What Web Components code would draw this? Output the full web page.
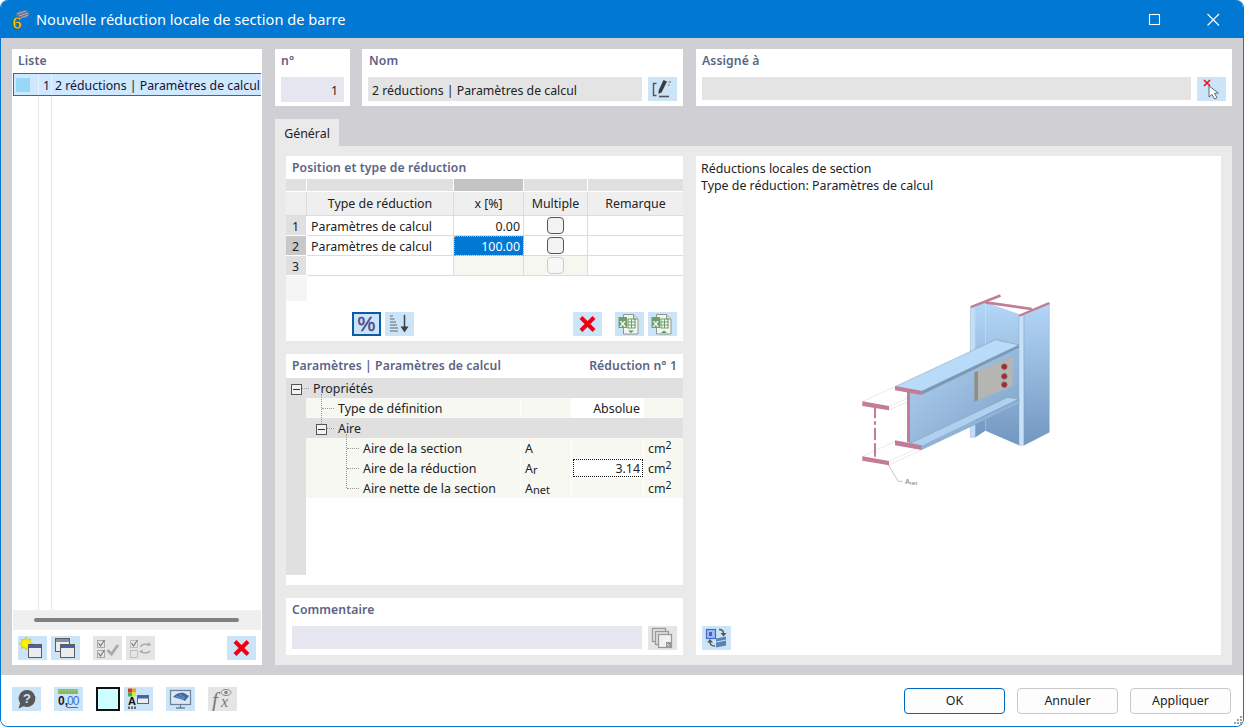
<!DOCTYPE html>
<html lang="fr"><head><meta charset="utf-8"><title>Nouvelle réduction</title>
<style>
html,body{margin:0;padding:0;height:100%;overflow:hidden;background:#fff}
body{font:12.4px/16px "Noto Sans","Liberation Sans",sans-serif;color:#222}
</style></head><body>
<app-window>
  <rf-main>
    <list-panel slot="list"></list-panel>
    <top-fields></top-fields>
    <tab-area>
      <position-table></position-table>
      <param-tree></param-tree>
      <comment-panel></comment-panel>
      <figure-panel slot="figure"></figure-panel>
    </tab-area>
  </rf-main>
  <footer-bar slot="footer"></footer-bar>
</app-window>
<script>
const FONT='"Noto Sans","Liberation Sans",sans-serif';
const WIN=(x,y,w,h)=>`<rect x="${x}" y="${y}" width="${w}" height="${h}" fill="#ececec" stroke="#5d5d5d"/><rect x="${x+.5}" y="${y+.5}" width="${w-1}" height="3" fill="#3f62b8"/>`;
const XLS=(arrow)=>`<path d="M8.500 2.500h10l4.500 4.500v15H8.500z" fill="#f4f4f4" stroke="#8a9a8a"/><path d="M18.500 2.500v4.500h4.500" fill="#ddd" stroke="#8a9a8a"/><rect x="3.500" y="5" width="8.500" height="11" fill="#6ea06e"/><text x="7.700" y="14.500" text-anchor="middle" font-family="Liberation Sans" font-weight="700" font-size="9.500" fill="#fff">X</text><path d="M12.500 7h8M12.500 10h8M12.500 13h8M12.500 16h8M13 7v9M16.500 7v9M20 7v9" stroke="#5f9a5f" stroke-width=".9"/>${arrow}`;
const ICONS={
 edit:`<path d="M8.500 6.500H5.500V18.500H8.500" fill="none" stroke="#555" stroke-width="1.400"/><path d="M11 19.500H21" stroke="#555" stroke-width="1.600"/><path d="M15.500 3l3.500 1.500-5.500 11-3 1.500.2-3.500z" fill="#3b3b3b"/><path d="M20.500 5h2.500M20 8h1.500" stroke="#666"/>`,
 cursorx:`<path d="M7 3l6 6M13 3l-6 6" stroke="#e8102a" stroke-width="1.700"/><path d="M12 9l0 11 3-2.500 2.500 4.500 2.500-1.300-2.500-4.300 3.800-.4z" fill="#fff" stroke="#666"/>`,
 percent:`<text x="14.500" y="19" text-anchor="middle" font-family="Liberation Sans" font-size="20" fill="#4b4a8e" stroke="#4b4a8e" stroke-width=".5">%</text>`,
 sort:`<path d="M5 4h3M5 7h4.500M5 10h6M5 13h7M5 16h8M5 19h8" stroke="#666" stroke-width="1"/><path d="M19.500 3v14" stroke="#444" stroke-width="1.500"/><path d="M15.500 14.500h8l-4 6z" fill="#3f3f3f"/>`,
 del:`<path d="M8 5.500l13 13M21 5.500l-13 13" stroke="#ee0011" stroke-width="4"/>`,
 xlsdown:XLS(`<path d="M13 18.500h6l-3 2.500z" fill="#4f9a5f"/>`),
 xlsup:XLS(`<path d="M13 21h6l-3-2.500z" fill="#4f9a5f"/>`),
 newwin:`<path d="M8 1l1.600 3 3.200-1-1 3.200 3 1.600-3 1.300 1 3.300-3.200-1.100L8 14l-1.500-2.700-3.300 1.100 1-3.300-3-1.300 3-1.600-1-3.200 3.300 1z" fill="#fff200" stroke="#b8a800" stroke-width=".5"/>${WIN(10.500,8.500,13,13)}`,
 copywin:`<rect x="4.500" y="2.500" width="14" height="13" fill="#ececec" stroke="#5d5d5d"/><rect x="5" y="3" width="13" height="3" fill="#8a8fa5"/>${WIN(9.500,8.500,14,13)}`,
 checkall:`<g fill="none" stroke="#aaa"><rect x="4.500" y="4.500" width="7" height="7"/><rect x="4.500" y="14.500" width="7" height="7"/></g><path d="M5.500 7l2 3 4-6M5.500 17l2 3 4-6" fill="none" stroke="#777" stroke-width="1.100"/><path d="M14.500 14l4 4 6.500-9" fill="none" stroke="#aaa" stroke-width="2.800"/>`,
 checktoggle:`<g fill="none" stroke="#c0c0c0"><rect x="4.500" y="14.500" width="7" height="7"/><rect x="4.500" y="4.500" width="7" height="7"/></g><path d="M5.500 7l2 3 4-6" fill="none" stroke="#777" stroke-width="1.100"/><path d="M14.500 11c1-3 6-3.500 9-2M24 15c-2 2.500-6 2.500-9 .7" fill="none" stroke="#aaa" stroke-width="1.500"/><path d="M22 6l3.500 3-4 1zM16.500 13.500l-3.500 2 3.500 2z" fill="#aaa"/>`,
 copydis:`<rect x="4.500" y="2.500" width="13" height="13" fill="none" stroke="#999" stroke-width="1.300"/><rect x="7.500" y="5.500" width="13" height="13" fill="#e0e0e0" stroke="#999" stroke-width="1.300"/><rect x="10.500" y="8.500" width="13" height="13" fill="#f0f0f0" stroke="#999" stroke-width="1.300"/><rect x="18" y="16" width="5" height="5" fill="#999"/><path d="M19 18l2 2" stroke="#eee"/>`,
 swap:`<rect x="4.500" y="3.500" width="9" height="9" fill="#9dbcf0" stroke="#4568c8" stroke-width="1.200"/><path d="M7 6h3v4H7z" fill="#3c63cf"/><path d="M17 3.500c3 0 4.500 1.500 4.500 4" fill="none" stroke="#555" stroke-width="1.300"/><path d="M18.500 7h6l-3 3.500z" fill="#555"/><path d="M13 20c-3 0-5-1.500-5-4" fill="none" stroke="#555" stroke-width="1.300"/><path d="M5 16.500h6l-3-3.500z" fill="#555"/><path d="M14 12.500l10-2v9l-10 2z" fill="#5b83b8"/><path d="M14 16l10-2" stroke="#d0e0f0"/>`,
 help:`<path d="M15 3a8.500 8.500 0 1 1-3.500 16.300l-5 2.200 1.600-5.300A8.500 8.500 0 0 1 15 3z" fill="#585858"/><text x="15" y="16.300" text-anchor="middle" font-family="Liberation Sans" font-weight="700" font-size="13" fill="#cce4f7">?</text>`,
 units:`<rect x="4" y="2" width="20" height="5" fill="#8fc36d"/><path d="M7 4.500v2.500M10 4.500v2.500M13 4.500v2.500M16 4.500v2.500M19 4.500v2.500M22 4.500v2.500" stroke="#5f9a45" stroke-width=".7"/><text x="4" y="18" font-family="Liberation Sans" font-weight="700" font-size="12" fill="#222">0,</text><text x="13" y="18" font-family="Liberation Sans" font-size="12" fill="#3b6fd0" letter-spacing="-1">00</text><path d="M13 20.500h11" stroke="#3b6fd0"/>`,
 colors:`<rect x="4" y="1.500" width="4" height="4" fill="#e52d2d"/><rect x="8" y="1.500" width="4" height="4" fill="#e8a02a"/><rect x="4" y="5.500" width="4" height="4" fill="#3bb24a"/><rect x="8" y="5.500" width="4" height="4" fill="#ece12a"/><text x="8" y="18" text-anchor="middle" font-family="Liberation Sans" font-weight="700" font-size="11" fill="#111">A</text><path d="M4 19.500h2v2.500H4zM7 19.500h2v2.500H7zM10 19.500h2v2.500h-2z" fill="#666"/><rect x="13.500" y="8.500" width="11" height="8" fill="#ececec" stroke="#666"/><rect x="14" y="9" width="10" height="2.500" fill="#3f62b8"/>`,
 display:`<rect x="4.500" y="3.500" width="20" height="14" fill="#dce7f2" stroke="#6c7f98" stroke-width="1.200"/><path d="M7 10c3-4 8-5 11-4l5 3c-1 2-3 3-4 5-3-2-8-3-12-4z" fill="#3f6aa8"/><path d="M10 9l8 3M13 7l6 4" stroke="#9cc0e8" stroke-width=".6"/><path d="M14.500 17.500v3M10 21h9" stroke="#6c7f98" stroke-width="1.300"/>`,
 fx:`<text x="4" y="20" font-family="Liberation Serif" font-style="italic" font-size="21" fill="#777">f</text><text x="13" y="20" font-family="Liberation Serif" font-style="italic" font-size="16" fill="#777">x</text><ellipse cx="18" cy="5.500" rx="5" ry="3" fill="#e5e5e5" stroke="#888"/><circle cx="18" cy="5.500" r="1.800" fill="#888"/>`
};
function def(name,html,init){customElements.define(name,class extends HTMLElement{
  constructor(){super();this.attachShadow({mode:'open'}).innerHTML=typeof html==='function'?html(this):html;}
  connectedCallback(){if(init)init(this)}
});}

def('icon-btn',()=>`<style>:host{display:inline-flex;width:29px;height:24px;box-sizing:border-box;background:#cce4f7;flex:none}
:host([disabled]){background:#e5e5e5}
:host([active]){outline:2px solid #0a5ca8;outline-offset:-2px}
svg{width:29px;height:24px;display:block}</style><svg viewBox="0 0 29 24"></svg>`,
 el=>{el.shadowRoot.querySelector('svg').innerHTML=ICONS[el.getAttribute('name')]||''});

def('panel-box',`<style>:host{display:flex;flex-direction:column;background:#fff;box-sizing:border-box;min-width:0}
.h{display:flex;justify-content:space-between;padding:0 6px;height:var(--head,23px);align-items:center;box-sizing:border-box;font:600 12.2px/16px ${FONT};color:#5b6484;letter-spacing:.1px}
.b{flex:1;min-height:0;display:flex;flex-direction:column;margin-top:var(--gap,0)}</style>
<div class="h"><slot name="title"></slot><slot name="right"></slot></div><div class="b"><slot></slot></div>`);

def('app-window',`<style>:host{display:flex;flex-direction:column;height:727px;box-sizing:border-box;border:1px solid #0078d4;border-top:0;border-radius:8px;overflow:hidden;background:#fff}
.t{height:38px;background:#0078d4;display:flex;align-items:center;color:#fff;flex:none;margin:0 -1px}
.t span{font:14.600px/20px ${FONT};margin-left:7px;white-space:nowrap}
.logo{margin-left:10px;width:19px;height:22px;display:block;overflow:visible}
.ctl{margin-left:auto;display:flex}
.ctl svg{width:58px;height:38px;display:block}
.m{flex:1;min-height:0;display:flex;flex-direction:column}
.f{height:51px;flex:none}</style>
<div class="t"><svg class="logo" viewBox="0 0 19 22"><path d="M5 7l4-4 8-1 3 4-3 4-7 0z" fill="#66758e"/><path d="M7 6l9-3M9 8l9-3M11 10l7-3" stroke="#b4bfd0" stroke-width=".8"/><text x="7" y="20.500" text-anchor="middle" font-family="Liberation Sans" font-weight="700" font-size="17" fill="#f6cc2e" stroke="#4a3a10" stroke-width=".5">6</text></svg><span>Nouvelle réduction locale de section de barre</span>
<div class="ctl"><svg viewBox="0 0 58 38"><rect x="20.500" y="14.500" width="10" height="10" fill="none" stroke="#fff" stroke-width="1.100"/></svg><svg viewBox="0 0 57 38" style="width:57px"><path d="M20.500 14l11.500 11.500M32 14L20.500 25.500" stroke="#fff" stroke-width="1.100"/></svg></div></div>
<div class="m"><slot></slot></div><div class="f"><slot name="footer"></slot></div>`);

def('rf-main',`<style>:host{display:grid;grid-template-columns:250px 1fr;column-gap:13px;flex:1;min-height:0;background:#d0cfd4;padding:11px 11px 10px 11px;height:637px;box-sizing:border-box}
.r{display:flex;flex-direction:column;min-width:0;min-height:0}</style>
<slot name="list"></slot><div class="r"><slot></slot></div>`);

def('list-panel',`<style>:host{display:block;min-height:0}
panel-box{height:100%;--head:24px}
.tree{flex:1;margin:0 1px;background:linear-gradient(#e6e6e6,#e6e6e6) 25px 0/1px 100% no-repeat,linear-gradient(#e6e6e6,#e6e6e6) 38px 0/1px 100% no-repeat}
.row{height:23px;box-sizing:border-box;border:1px solid #0078d4;border-right:0;padding-top:2px;font-size:12.300px;background:linear-gradient(#eef,#eef) 24px 0/1px 100% no-repeat,linear-gradient(#eef,#eef) 37px 0/1px 100% no-repeat,#cde8ff;display:flex;align-items:center;white-space:nowrap;overflow:hidden;color:#201030}
.sw{width:14px;height:14px;background:#96d8f5;margin:-2px 0 0 2px;flex:none}
.n{width:20px;text-align:right;flex:none}
.txt{margin-left:5px}
.sb{height:20px;background:#efefef;margin:0 1px;display:flex;align-items:center;padding:0 22px 0 21px}
.th{height:4px;background:#808080;border-radius:2px;flex:1}
.tb{height:35px;display:flex;align-items:flex-start;padding:6px 6px 0;box-sizing:border-box;gap:4px}
.g{margin-left:9px}.e{margin-left:auto}</style>
<panel-box><span slot="title">Liste</span>
<div class="tree"><div class="row"><i class="sw"></i><span class="n">1</span><span class="txt">2 réductions | Paramètres de calcul</span></div></div>
<div class="sb"><div class="th"></div></div>
<div class="tb"><icon-btn name="newwin"></icon-btn><icon-btn name="copywin"></icon-btn><icon-btn class="g" name="checkall" disabled></icon-btn><icon-btn name="checktoggle" disabled></icon-btn><icon-btn class="e" name="del"></icon-btn></div>
</panel-box>`);

def('top-fields',`<style>:host{display:flex;gap:12px;height:57px;flex:none}
panel-box{--head:24px;--gap:4px}
.a{width:75px}.b{width:321px}.c{flex:1;margin-left:1px}
.row{display:flex;padding:0 6px;gap:6px}
.f{flex:1;height:24px;background:#e4e4e4;line-height:27px;font-size:12.300px;padding:0 4px;white-space:nowrap;overflow:hidden;box-sizing:border-box;color:#222}
.num{background:#e6e6f0;text-align:right;padding-right:6px;height:25px}</style>
<panel-box class="a"><span slot="title">n°</span><div class="row"><div class="f num">1</div></div></panel-box>
<panel-box class="b"><span slot="title" style="margin-left:1px">Nom</span><div class="row"><div class="f">2 réductions | Paramètres de calcul</div><icon-btn name="edit"></icon-btn></div></panel-box>
<panel-box class="c"><span slot="title">Assigné à</span><div class="row"><div class="f" style="height:23px"></div><icon-btn name="cursorx"></icon-btn></div></panel-box>`);

def('tab-area',`<style>:host{display:flex;flex-direction:column;flex:1;min-height:0;margin-top:13px}
.tab{width:64px;height:27px;background:#eaeaea;line-height:30px;text-align:center;box-sizing:border-box;flex:none}
.body{flex:1;min-height:0;background:#eaeaea;padding:10px 11px;display:grid;grid-template-columns:397px 525px;column-gap:13px}
.l{display:flex;flex-direction:column;gap:13px;min-height:0}</style>
<div class="tab">Général</div><div class="body"><div class="l"><slot></slot></div><slot name="figure"></slot></div>`);

def('position-table',`<style>:host{display:block;height:185px;flex:none}
panel-box{height:100%;--head:23px}
.g{display:grid;grid-template-columns:21px 147px 70px 64px 95px;grid-template-rows:13px 24px 20px 20px 20px;line-height:19px}
.g>div{box-sizing:border-box;border-right:1px solid #dcdcdc;border-bottom:1px solid #dcdcdc;white-space:nowrap;overflow:hidden;display:flex;align-items:center;padding-top:1px}
.g>div:nth-child(5n){border-right:0}
.t{background:#e0e0e0;border-color:#fff!important}.dk{background:#c4c4c4}
.g>.hd{background:#efefef;justify-content:center;padding-top:0}
.rh{background:#e0e0e0;justify-content:center;border-color:#fff!important;padding-right:1px}.rh.on{background:#c8c8c8}
.tx{padding-left:4px}
.num{justify-content:flex-end;padding-right:3px}
.sel{background:#0078d4;color:#fff;outline:1px dotted #f09030;outline-offset:-1px;padding-right:3px;justify-content:flex-end}
.c{justify-content:center}
.g>.c{padding-top:0}
.off{background:#f7f7f2}
i{display:block;width:17px;height:17px;box-sizing:border-box;border:1.500px solid #555;border-radius:4px;background:#f3f3f3}
.off i{border-color:#ccc;background:#f7f7f7}
.sp{width:21px;height:25px;background:#f5f5f5;flex:none}
.tb{display:flex;padding:11px 6px 0 66px}
.tb icon-btn{margin-right:4px}</style>
<panel-box><span slot="title">Position et type de réduction</span>
<div class="g">
<div class="t"></div><div class="t"></div><div class="t dk"></div><div class="t"></div><div class="t"></div>
<div class="hd"></div><div class="hd">Type de réduction</div><div class="hd">x [%]</div><div class="hd">Multiple</div><div class="hd">Remarque</div>
<div class="rh">1</div><div class="tx">Paramètres de calcul</div><div class="num">0.00</div><div class="c"><i></i></div><div></div>
<div class="rh on">2</div><div class="tx">Paramètres de calcul</div><div class="sel">100.00</div><div class="c"><i></i></div><div></div>
<div class="rh">3</div><div class="tx"></div><div class="off"></div><div class="c off"><i></i></div><div></div>
</div>
<div class="sp"></div>
<div class="tb"><icon-btn name="percent" active></icon-btn><icon-btn name="sort"></icon-btn><icon-btn name="del" style="margin-left:155px;margin-right:13px"></icon-btn><icon-btn name="xlsdown"></icon-btn><icon-btn name="xlsup" style="margin-right:0"></icon-btn></div>
</panel-box>`);

def('tree-row',`<style>:host{display:grid;grid-template-columns:20px 215px 51px 72px 39px;height:20px;line-height:21px;white-space:nowrap;position:relative}
div{box-sizing:border-box;background:#f7f8f2;border-right:1px solid #fff;overflow:hidden}
.gut{background:#e0e0e0;border:0}
.nm{padding-left:var(--ind,0)}
:host([group]) div{background:#e0e0e0;border:0}
:host([group]) .nm{grid-column:2/6}
:host([group]) .x{display:none}
.val{text-align:right;padding-right:3px}
:host([white]) .val{background:#fff}
:host([focus]) .val{background:#fff;outline:1px dotted #111;outline-offset:-2px;padding-right:3px}
.sym{padding-left:4px}.un{padding-left:4px;border:0}
</style><div class="gut"></div><div class="nm"><slot></slot></div><div class="sym x"><slot name="sym"></slot></div><div class="val x"><slot name="val"></slot></div><div class="un x"><slot name="un"></slot></div>`);

def('param-tree',`<style>:host{display:block;height:231px;flex:none}
panel-box{height:100%;--head:24px}
.w{position:relative;flex:1;display:flex;flex-direction:column;line-height:20px}
.gut{flex:1;margin-bottom:10px;width:20px;background:#e0e0e0}
.exp{position:absolute;width:9px;height:9px;border:1px solid #555;background:#f2f2f2}
.exp::after{content:"";position:absolute;left:1px;right:1px;top:4px;height:1px;background:#333}
.v{position:absolute;width:0;border-left:1px dotted #999}
.hz{position:absolute;height:0;border-top:1px dotted #999}
</style>
<panel-box><span slot="title">Paramètres | Paramètres de calcul</span><span slot="right">Réduction n° 1</span>
<div class="w">
<tree-row group style="--ind:7px">Propriétés</tree-row>
<tree-row white style="--ind:32px">Type de définition<span slot="val">Absolue</span></tree-row>
<tree-row group style="--ind:32px">Aire</tree-row>
<tree-row style="--ind:57px">Aire de la section<span slot="sym">A</span><span slot="un">cm<sup style="font-size:10.500px;line-height:0;vertical-align:4px">2</sup></span></tree-row>
<tree-row focus style="--ind:57px">Aire de la réduction<span slot="sym">A<span style="font-size:11px;vertical-align:-1px">r</span></span><span slot="val">3.14</span><span slot="un">cm<sup style="font-size:10.500px;line-height:0;vertical-align:4px">2</sup></span></tree-row>
<tree-row style="--ind:57px">Aire nette de la section<span slot="sym">A<span style="font-size:11px;vertical-align:-1px">net</span></span><span slot="un">cm<sup style="font-size:10.500px;line-height:0;vertical-align:4px">2</sup></span></tree-row>
<div class="gut"></div>
<i class="exp" style="left:5px;top:6px"></i><i class="hz" style="left:16px;top:10px;width:7px"></i>
<i class="v" style="left:35px;top:16px;height:30px"></i><i class="hz" style="left:36px;top:30px;width:12px"></i>
<i class="exp" style="left:30px;top:46px"></i><i class="hz" style="left:41px;top:50px;width:7px"></i>
<i class="v" style="left:60px;top:56px;height:54px"></i>
<i class="hz" style="left:61px;top:70px;width:12px"></i><i class="hz" style="left:61px;top:90px;width:12px"></i><i class="hz" style="left:61px;top:110px;width:12px"></i>
</div></panel-box>`);

def('comment-panel',`<style>:host{display:block;height:57px;flex:none}
panel-box{height:100%;--head:24px;--gap:4px}
.row{display:flex;gap:6px;padding:0 6px}
.f{flex:1;height:23px;background:#e6e6f0}</style>
<panel-box><span slot="title">Commentaire</span><div class="row"><div class="f"></div><icon-btn name="copydis" disabled></icon-btn></div></panel-box>`);

def('beam-figure',`<style>:host{display:block;width:240px;height:210px}svg{width:240px;height:210px;display:block}</style>
<svg viewBox="0 0 720 630"><defs>
<linearGradient id="c" x1="0" y1="0" x2="0" y2="1"><stop offset="0" stop-color="#b4d7f8"/><stop offset="1" stop-color="#7297c0"/></linearGradient>
<linearGradient id="w" x1="0" y1="0" x2="1" y2="1"><stop offset="0" stop-color="#b2d3f3"/><stop offset="1" stop-color="#7b9fc6"/></linearGradient>
<filter id="b"><feGaussianBlur stdDeviation="0.900"/></filter></defs>
<g filter="url(#b)">
<g stroke="#d2d2d2" stroke-width="1.500" fill="none"><path d="M97 353L195 308M177 368L275 322M177 378L237 352M97 518L195 472M177 532L275 487M177 543L275 497"/></g>
<path d="M421 70L436 65V460H421z" fill="#c2def8" stroke="#7f93a8"/><path d="M436 65L466 55V440L436 460z" fill="url(#c)"/>
<path d="M466 55L567 90V484L466 440z" fill="url(#c)"/>
<path d="M567 92L582 90V484H567z" fill="#c7e1f9" stroke="#7f93a8"/><path d="M582 90L658 57V445L582 484z" fill="url(#c)" stroke="#7f93a8"/>
<g fill="#c27c96"><path d="M421 66L510 31 513 38 423 73z"/><path d="M466 51L606 71 604 79 466 59z"/><path d="M566 92L656 54 660 60 569 98z"/></g>
<path d="M237 325L567 190V347L237 480z" fill="url(#w)"/>
<path d="M433 265L548 217V305L433 353z" fill="#b5b5b2"/><path d="M433 265L444 261V349L433 353z" fill="#8e8e8e"/>
<g fill="#b8202e" stroke="#666" stroke-width="3"><circle cx="523" cy="248" r="8"/><circle cx="523" cy="277" r="8"/><circle cx="523" cy="302" r="8"/></g>
<path d="M195 308L497 167 567 183 275 322z" fill="#b9dbfa" stroke="#7c95ad" stroke-width="1.500"/>
<path d="M275 322L567 183V191L275 332z" fill="#7e98b3"/>
<path d="M240 478L533 340 567 345 275 487z" fill="#b0d0f0" stroke="#7c95ad" stroke-width="1.500"/>
<path d="M275 487L567 347V360L275 497z" fill="#8fb4dc" stroke="#7c95ad"/>
<g fill="#c27c96"><path d="M195 306L275 321V333L195 319z"/><path d="M231 318H240V475H231z"/><path d="M195 469L275 484V498L195 484z"/><path d="M97 352L177 366V379L97 366z"/><path d="M97 517L177 531V544L97 530z"/>
<path d="M132 366h6v36h-6zM132 412h6v10h-6zM132 432h6v36h-6zM132 478h6v40h-6z"/></g>
<path d="M170 535L205 592H218" fill="none" stroke="#888" stroke-width="1.500"/>
</g>
<text x="225" y="600" font-family="Liberation Sans" font-size="22" fill="#777">A<tspan font-size="16" dy="4">net</tspan></text>
</svg>`);

def('figure-panel',`<style>:host{display:flex;flex-direction:column;background:#fff;padding:4px 5px 5px;box-sizing:border-box;line-height:17px;color:#222}
beam-figure{margin:90px 0 0 129px}
icon-btn{margin-top:auto;align-self:flex-start;margin-left:1px}</style>
<div>Réductions locales de section</div><div>Type de réduction: Paramètres de calcul</div><beam-figure></beam-figure><icon-btn name="swap"></icon-btn>`);

def('footer-bar',`<style>:host{display:flex;height:51px;box-sizing:border-box;padding:12px 12px 0 11px;background:#fff;align-items:flex-start;position:relative}
icon-btn{margin-right:13px}
.sw{width:24px;height:24px;box-sizing:border-box;border:2px solid #111;background:#ccffff;margin-right:4px;flex:none}
.sp{flex:1}
button{width:101px;height:26px;margin:1px 0 0 12px;box-sizing:border-box;background:#fdfdfd;border:1px solid #c8c8c8;border-radius:4px;font:12.4px/16px ${FONT};color:#222;padding:0}
button.ok{border:1.500px solid #0067c0}
.grip{position:absolute;right:0;bottom:1px;width:10px;height:10px}</style>
<icon-btn name="help"></icon-btn><icon-btn name="units"></icon-btn><div class="sw"></div><icon-btn name="colors"></icon-btn><icon-btn name="display"></icon-btn><icon-btn name="fx" disabled></icon-btn><div class="sp"></div>
<button class="ok">OK</button><button>Annuler</button><button>Appliquer</button>
<svg class="grip" viewBox="0 0 10 10"><g fill="#a0a0a0"><rect x="7" y="1" width="2" height="2"/><rect x="4" y="4" width="2" height="2"/><rect x="7" y="4" width="2" height="2"/><rect x="1" y="7" width="2" height="2"/><rect x="4" y="7" width="2" height="2"/><rect x="7" y="7" width="2" height="2"/></g></svg>`);
</script>
</body></html>
